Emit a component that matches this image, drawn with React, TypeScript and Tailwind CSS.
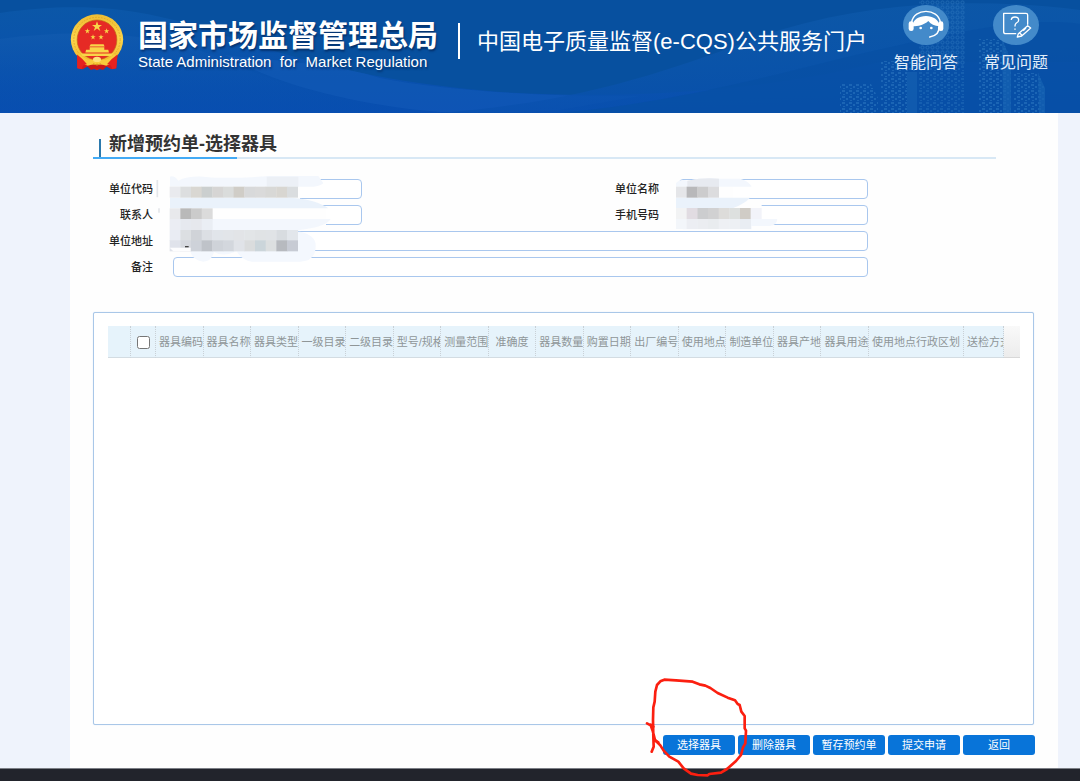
import type { ReactNode } from "react";

type Block = [x: number, y: number, fill: string];

const columns: string[] = [
  "器具编码",
  "器具名称",
  "器具类型",
  "一级目录",
  "二级目录",
  "型号/规格",
  "测量范围",
  "准确度",
  "器具数量",
  "购置日期",
  "出厂编号",
  "使用地点",
  "制造单位",
  "器具产地",
  "器具用途",
];

const actions: string[] = ["选择器具", "删除器具", "暂存预约单", "提交申请", "返回"];

const toBlocks = (x: number, y: number, fills: string[]): Block[] =>
  fills.map((fill, i) => [x + i * 32, y, fill]);

const unitBlocks: Block[] = [
  ...toBlocks(299, 200, ["#e9eaee", "#dcdedf", "#d9d7d2", "#cbcfcf", "#d6d5d4", "#dadcdb", "#d0cdc7", "#d8d9da", "#dadada", "#d8d8d6", "#d8d6d1", "#dadddf"]),
  ...toBlocks(299, 265, ["#e8e9ec", "#b9b9b9", "#cbcbcb", "#dbdbdb"]),
  ...toBlocks(299, 297, ["#ebedf3", "#e6e9ef", "#e6e8ed", "#eaeef4"]),
  ...toBlocks(299, 330, ["#e9ecf3", "#dcdfe2", "#d0d3d8", "#dcdfe4", "#e1e5ea", "#e2e5e9", "#e2e4e7", "#e2e5e7", "#e0e3e5", "#e0e3e6", "#d8dce0", "#e2e6eb"]),
  ...toBlocks(299, 361, ["#e0e3eb", "#d6d9df", "#ced2d9", "#bfc3c9", "#cfd3d9", "#d3d7dd", "#e0e3e8", "#dadcdd", "#cbd5da", "#dcdfe0", "#b7babf", "#c7cbd4"]),
];

const nameBlocks: Block[] = [
  ...toBlocks(228, 110, ["#e5e6e9", "#b8b8ba", "#cccccd", "#dcdcde"]),
  ...toBlocks(228, 174, ["#f2f3f4", "#e1dce2", "#cccdcf", "#d1d1d2", "#dddcda", "#dde0df", "#d0ccc6", "#f2f3f9"]),
  ...toBlocks(228, 207, ["#f3f6fa", "#eceef3", "#ebedf1", "#e9ecef", "#eef0f4", "#edf0f4", "#e9edf3"]),
];

const Emblem = () => (
  <svg viewBox="0 0 160 172" className="h-[57px] w-[54px] shrink-0" aria-hidden="true">
    <defs>
      <linearGradient id="gold" x1="0" y1="0" x2="0" y2="1">
        <stop offset="0" stopColor="#f0bd33" />
        <stop offset="0.5" stopColor="#fbd44b" />
        <stop offset="1" stopColor="#f2b327" />
      </linearGradient>
    </defs>
    <path d="M20 122 L22 164 L37 167 L52 158 L80 170 L108 158 L123 167 L138 164 L142 122 Z" fill="#d41a1c" />
    <ellipse cx="80" cy="77" rx="79" ry="76" fill="url(#gold)" />
    <ellipse cx="80" cy="77" rx="70" ry="67" fill="none" stroke="#d99b21" strokeWidth="2" strokeDasharray="5 4" />
    <circle cx="80" cy="78" r="60" fill="#e62a25" stroke="#bd6a18" strokeWidth="2" />
    <g fill="#f9d548">
      <path d="M80 22 L84 33 L95 33 L86 40 L90 51 L80 44 L70 51 L74 40 L65 33 L76 33 Z" />
      <path d="M51 43 L53 49 L59 49 L54 53 L56 59 L51 55 L46 59 L48 53 L43 49 L49 49 Z" />
      <path d="M109 43 L111 49 L117 49 L112 53 L114 59 L109 55 L104 59 L106 53 L101 49 L107 49 Z" />
      <path d="M68 61 L70 67 L76 67 L71 71 L73 77 L68 73 L63 77 L65 71 L60 67 L66 67 Z" />
      <path d="M92 61 L94 67 L100 67 L95 71 L97 77 L92 73 L87 77 L89 71 L84 67 L90 67 Z" />
      <path d="M61 91 H100 L103 98 H57 Z M58 100 H102 V108 H114 L116 116 H45 L47 108 H58 Z M31 119 H129 L124 127 H36 Z" />
    </g>
    <path d="M28 120 Q54 148 80 134 Q106 148 132 120 L138 130 Q120 158 98 157 Q86 155 80 148 Q74 155 62 157 Q40 158 22 130 Z" fill="#f8cb3c" />
    <path d="M20 122 Q34 132 50 152 Q37 150 34 167 L20 164 Z M142 122 Q126 132 110 152 Q123 150 126 167 L138 164 Z" fill="#e5221f" />
    <path d="M50 158 Q64 150 80 154 Q96 150 110 158 L98 169 Q80 162 62 169 Z" fill="#c91718" />
    <ellipse cx="80" cy="137" rx="12" ry="8" fill="#fde07a" />
    <path d="M68 150 Q80 158 92 150" fill="none" stroke="#d99b21" strokeWidth="3" />
  </svg>
);

const HeaderWaves = () => (
  <svg viewBox="0 0 1080 113" preserveAspectRatio="none" className="absolute inset-0 h-full w-full" aria-hidden="true">
    <defs>
      <linearGradient id="low" x1="0" y1="0" x2="0" y2="1">
        <stop offset="0" stopColor="#0b57a8" />
        <stop offset="1" stopColor="#084eb0" />
      </linearGradient>
      <linearGradient id="mid" x1="0" y1="0" x2="0" y2="1">
        <stop offset="0" stopColor="#135cb0" stopOpacity="0.6" />
        <stop offset="0.8" stopColor="#074fb0" stopOpacity="0.2" />
      </linearGradient>
      <linearGradient id="right" x1="0" y1="0" x2="0.2" y2="1">
        <stop offset="0" stopColor="#1260b0" stopOpacity="0.6" />
        <stop offset="1" stopColor="#084fae" />
      </linearGradient>
    </defs>
    <rect width="1080" height="113" fill="#07509f" />
    <path d="M0 13 C90 0 150 10 220 34 C320 68 400 84 500 92 C640 101 780 88 880 62 L1080 62 V113 H0 Z" fill="url(#low)" />
    <path d="M0 39 C80 28 160 33 220 58 C270 80 320 100 420 113 H0 Z" fill="url(#mid)" />
    <path d="M225 55 C280 62 330 62 380 78 C450 92 560 97 640 96 L560 110 C520 113 480 113 440 112 C350 105 270 82 225 55 Z" fill="#2068c4" fillOpacity="0.25" />
    <path d="M440 113 C600 100 680 65 780 30 C880 0 980 -2 1080 10 V113 Z" fill="url(#right)" fillOpacity="0.75" />
    <path d="M560 113 C700 100 800 66 900 45 C980 26 1040 18 1080 24 V113 Z" fill="#0750a4" fillOpacity="0.7" />
  </svg>
);

const Skyline = () => (
  <svg viewBox="0 0 280 113" className="absolute right-0 top-0 h-full w-[280px]" aria-hidden="true">
    <defs>
      <pattern id="rings" width="5" height="5" patternUnits="userSpaceOnUse">
        <rect x="1" y="1" width="3" height="3" rx="1" fill="none" stroke="#3b86c9" strokeWidth="1" />
      </pattern>
      <pattern id="dots" width="7" height="6" patternUnits="userSpaceOnUse">
        <path d="M0 0h3v2h-3z M4 2h2v2h-2z M1 4h2v1h-2z" fill="#3580c6" />
      </pattern>
    </defs>
    <g opacity="0.45">
      <rect x="119" y="0" width="46" height="66" fill="url(#rings)" />
      <rect x="119" y="66" width="46" height="47" fill="url(#dots)" opacity="0.7" />
      <path d="M40 84 H71 L78 98 V113 H40 Z" fill="url(#dots)" />
      <path d="M80 61 H116 V113 H80 Z" fill="url(#dots)" />
      <path d="M107 72 H117 V113 H107 Z" fill="#1c69b8" />
      <path d="M179 39 H202 L211 60 V113 H179 Z" fill="url(#dots)" />
      <path d="M202 39 L211 60 V113 H203 Z" fill="#2a79c0" opacity="0.7" />
      <path d="M213 73 H238 L245 88 V113 H213 Z" fill="url(#dots)" />
      <path d="M238 73 L245 88 V113 H239 Z" fill="#2a79c0" opacity="0.7" />
    </g>
  </svg>
);

const AssistantIcon = () => (
  <svg viewBox="0 0 138 120" className="h-10 w-[46px]" aria-hidden="true">
    <ellipse cx="69" cy="60" rx="69" ry="60" fill="#438aca" />
    <path d="M26 52 C32 8 106 8 112 52" fill="none" stroke="#fff" strokeWidth="4" />
    <path d="M28 64 C30 24 106 22 110 64 C94 62 84 58 76 48 C62 60 46 64 28 64 Z" fill="#fff" />
    <rect x="17" y="49" width="15" height="29" rx="7" fill="#fff" />
    <rect x="106" y="49" width="15" height="29" rx="7" fill="#fff" />
    <path d="M107 66 C110 84 100 92 80 96" fill="none" stroke="#fff" strokeWidth="4" strokeLinecap="round" />
    <circle cx="53" cy="69" r="4" fill="#fff" />
    <circle cx="85" cy="69" r="4" fill="#fff" />
  </svg>
);

const QuestionIcon = () => (
  <svg viewBox="0 0 138 120" className="h-10 w-[46px]" aria-hidden="true">
    <ellipse cx="69" cy="60" rx="69" ry="60" fill="#438aca" />
    <g fill="none" stroke="#fff" strokeWidth="4" strokeLinecap="round" strokeLinejoin="round">
      <path d="M104 58 V30 Q104 25 99 25 H32 V80 Q32 86 38 86 H68" />
      <path d="M55 43 Q56 36 66 36 Q77 36 77 45 Q77 51 70 54 Q66 57 66 63" />
      <path d="M66 72 V73" />
      <path d="M104 62 L113 69 L86 93 L73 96 L76 86 Z M80 84 L87 91 M92 76 L98 70" />
    </g>
  </svg>
);

const UnitMosaic = () => (
  <svg viewBox="255 165 540 270" className="pointer-events-none absolute -left-[18px] -top-1 z-10 h-[90px] w-[180px]" aria-hidden="true">
    <path d="M262 180 V232 M267 265 V278" stroke="#e4e6ea" strokeWidth="5" />
    <path d="M300 170 H690 V238 H712 L768 262 V320 H300 Z" fill="#fefefe" />
    <path d="M300 170 Q312 165 325 182 Q350 168 400 170 Q470 178 600 168 H745 L760 190 Q750 199 730 200 H300 Z" fill="#f3f7fd" />
    <path d="M590 170 H685 V200 H590 Z" fill="#ecf0f6" />
    <path d="M300 233 H660 Q740 238 775 265 H300 Z" fill="#eaf2fb" />
    <path d="M300 297 H782 Q770 320 690 330 L660 340 H300 Z" fill="#f3f7fd" />
    <path d="M340 335 H690 Q736 345 737 375 Q738 424 690 425 H545 Q515 420 500 394 Q460 412 432 396 Q425 424 400 425 Q365 420 360 390 Z" fill="#f4f8fe" />
    {unitBlocks.map(([x, y, fill]) => (
      <rect key={`${x}-${y}`} x={x} y={y} width="33" height="33" fill={fill} />
    ))}
    <path d="M299 383 H362 V394 H310 Z" fill="#fdfdfe" />
    <path d="M345 380 H356" stroke="#444" strokeWidth="4" />
  </svg>
);

const NameMosaic = () => (
  <svg viewBox="222 78 318 168" className="pointer-events-none absolute -left-[5px] -top-[3px] z-10 h-[56px] w-[106px]" aria-hidden="true">
    <path d="M228 98 H400 V165 H485 V210 H228 Z" fill="#fefefe" />
    <path d="M228 100 Q240 86 262 92 Q310 82 360 86 H420 Q445 92 455 110 H228 Z" fill="#f3f7fd" />
    <path d="M262 92 Q310 82 357 86 V110 H262 Z" fill="#e7eaf0" />
    <path d="M228 143 H450 Q435 160 400 174 H228 Z" fill="#eaf2fb" />
    <path d="M228 207 H532 Q530 226 510 228 H455 V238 H250 Q232 236 228 225 Z" fill="#f3f7fd" />
    {nameBlocks.map(([x, y, fill]) => (
      <rect key={`${x}-${y}`} x={x} y={y} width="33" height={y === 207 ? 30 : 33} fill={fill} />
    ))}
  </svg>
);

type FieldProps = {
  id: string;
  label: string;
  wide?: boolean;
  children?: ReactNode;
};

const Field = ({ id, label, wide, children }: FieldProps) => (
  <>
    <label htmlFor={id} className="text-right text-[11px] leading-5 font-medium text-[#222]">
      {label}
    </label>
    <div className={wide ? "relative col-span-3" : "relative"}>
      <input
        id={id}
        type="text"
        className="block h-5 w-full rounded-[4px] border border-[#a9c7ee] bg-white px-2 text-[11px] outline-none"
      />
      {children}
    </div>
  </>
);

const RedCircle = () => (
  <svg viewBox="72 48 318 312" className="pointer-events-none absolute -left-[18px] -top-[59px] z-20 h-[104px] w-[106px] max-w-none" aria-hidden="true">
    <g fill="none" stroke="#fb1f10" strokeWidth="8" strokeLinecap="round" strokeLinejoin="round">
      <path d="M92 275 L98 260 L97 230 L96 180 L97 142 L101 125 L103 95 L108 75 L118 64 L130 59 L165 61 L215 65 L235 73 L253 77 L268 84 L290 99 L320 113 L342 121 L350 132 L356 135 L361 155 L371 168 L371 205 L375 212 L373 250 L366 262 L360 285 L345 303 L318 327 L300 338 L265 342 L260 346 L230 345 L210 341 L188 325 L172 305 L145 290 L128 272 L118 256 L102 240 L95 212 L89 196 L78 190" />
      <path d="M89 194 L97 200 M100 240 L112 247" />
    </g>
  </svg>
);

const thClass =
  "h-8 overflow-hidden whitespace-nowrap border-b border-r border-b-[#d3dce2] border-r-[#c9d0d6] bg-[#e6f3fb] px-[3px] pt-[2px] text-center font-normal [border-right-style:dotted]";

const App = () => {
  return (
    <div className="flex min-h-screen flex-col bg-[#eff3fc] font-['Liberation_Sans','Noto_Sans_CJK_SC',sans-serif] text-[#333]">
      <header className="relative flex h-[113px] items-start overflow-hidden bg-[#07509f] pl-[70px] pr-8 text-white">
        <HeaderWaves />
        <Skyline />
        <div className="relative flex items-start pt-[14px]">
          <Emblem />
          <div className="ml-[14px] whitespace-nowrap [text-shadow:1px_2px_2px_rgba(0,20,60,0.5)]">
            <h1 className="mt-1 text-[30px] leading-9 font-bold">国家市场监督管理总局</h1>
            <p className="whitespace-pre text-[15px] leading-4">{"State Administration  for  Market Regulation"}</p>
          </div>
          <div className="ml-5 mt-[9px] h-9 w-[2px] shrink-0 bg-white" />
          <p className="ml-[17px] mt-3 whitespace-nowrap text-[22px] leading-8">中国电子质量监督(e-CQS)公共服务门户</p>
        </div>
        <nav className="relative ml-auto flex gap-[26px] pt-[5px] text-[16px] leading-6 text-[#e3eefa]">
          <a href="#assistant" className="flex flex-col items-center gap-[6px] whitespace-nowrap">
            <AssistantIcon />
            智能问答
          </a>
          <a href="#faq" className="flex flex-col items-center gap-[6px] whitespace-nowrap">
            <QuestionIcon />
            常见问题
          </a>
        </nav>
      </header>

      <main className="ml-[70px] mr-[22px] flex flex-1 flex-col bg-[#fefefe] pb-[13px] pl-[23px] pr-6 pt-[19px]">
        <div className="mr-[38px] flex border-b-2 border-[#d8e8f5]">
          <div className="-mb-[2px] flex w-36 items-end border-b-2 border-[#42aaf5]">
            <span className="ml-[6px] mr-2 h-[18px] w-[2px] shrink-0 bg-[#2b79ad]" />
            <h2 className="whitespace-nowrap text-[18px] leading-[25px] font-bold">新增预约单-选择器具</h2>
          </div>
        </div>

        <form className="mt-5 grid max-w-[775px] grid-cols-[60px_189px_1fr_189px] gap-x-5 gap-y-[6px]">
          <Field id="unitCode" label="单位代码">
            <UnitMosaic />
          </Field>
          <Field id="unitName" label="单位名称">
            <NameMosaic />
          </Field>
          <Field id="contact" label="联系人" />
          <Field id="phone" label="手机号码" />
          <Field id="address" label="单位地址" wide />
          <Field id="remark" label="备注" wide />
        </form>

        <section className="mt-[35px] flex-1 rounded-[2px] border border-[#a9c7e8] bg-white pl-[14px] pr-[13px] pt-[13px] shadow-[0_0_1px_#bcd6f2]">
          <table className="w-full table-fixed border-separate border-spacing-0 text-[11px] text-[#8f9698]">
            <colgroup>
              <col className="w-[23px]" />
              <col className="w-[25px]" />
              {columns.map((name) => (
                <col key={name} />
              ))}
              <col className="w-[95px]" />
              <col className="w-10" />
              <col className="w-4" />
            </colgroup>
            <thead>
              <tr>
                <th className={thClass} />
                <th className={thClass}>
                  <input type="checkbox" aria-label="全选" className="mx-auto block h-[13px] w-[13px]" />
                </th>
                {columns.map((name) => (
                  <th key={name} className={thClass}>
                    {name}
                  </th>
                ))}
                <th className={thClass}>使用地点行政区划</th>
                <th className={thClass}>送检方式</th>
                <th className="border-b border-[#d8d8d8] bg-linear-to-b from-[#f9f9f9] to-[#ececec]" />
              </tr>
            </thead>
          </table>
        </section>

        <div className="-mr-px mt-[10px] flex justify-end gap-[3px]">
          {actions.map((name, index) => (
            <div key={name} className="relative">
              <button type="button" className="block h-5 w-[72px] rounded-[3px] bg-[#0874d9] text-center text-[11px] leading-5 text-white">
                {name}
              </button>
              {index === 0 && <RedCircle />}
            </div>
          ))}
        </div>
      </main>

      <footer className="h-[13px] border-t border-[#7c7f86] bg-[#22242c]" />
    </div>
  );
};

export default App;
